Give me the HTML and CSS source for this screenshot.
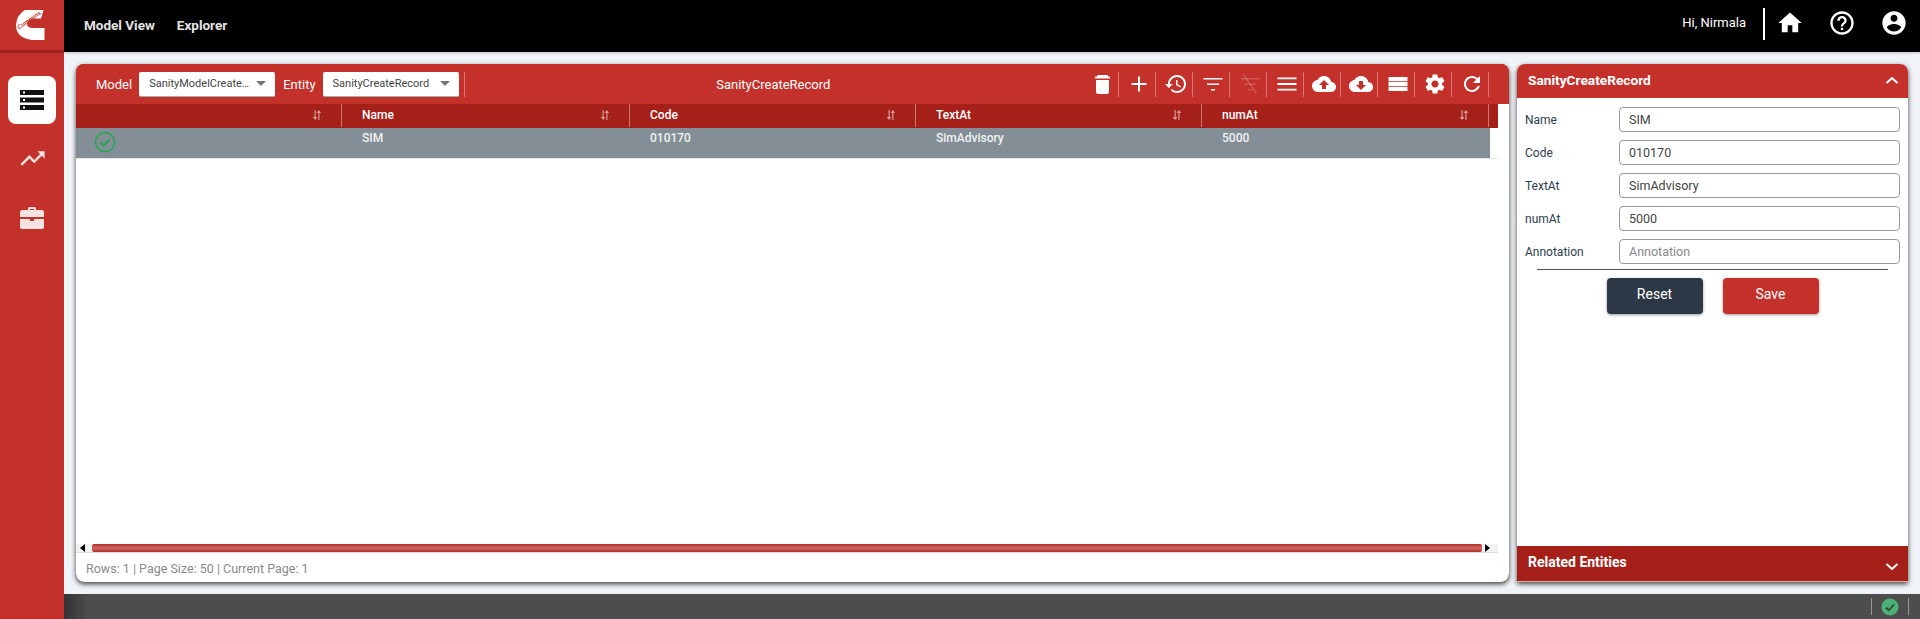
FILE: index.html
```html
<!DOCTYPE html>
<html lang="en">
<head>
    <meta charset="UTF-8">
    <title>Model View</title>
    <link rel="stylesheet" href="styles.css">
</head>
<body>
    <div class="app">
        <aside class="sidebar">
            <div class="logo">
                <svg width="64" height="50" viewBox="0 0 64 50">
                    <path fill="#fff" d="M25 10H43.500L41 18.500H33Q27 19.500 27 23.500Q27 27.500 32 28H44.500V40H32Q16 38 16 25Q17 14 25 10Z"/>
                    <text class="logo-text" transform="translate(19 29.500) rotate(-35)">Cummins</text>
                </svg>
            </div>
            <nav class="side-nav">
                <a class="side-item active">
                    <svg width="24" height="20" viewBox="0 0 24 20">
                        <rect y="0" width="24" height="5" fill="#111"/>
                        <rect y="7.500" width="24" height="5" fill="#111"/>
                        <rect y="15" width="24" height="5" fill="#111"/>
                        <rect x="3" y="1.500" width="2" height="2" fill="#fff"/>
                        <rect x="3" y="9" width="2" height="2" fill="#fff"/>
                        <rect x="3" y="16.500" width="2" height="2" fill="#fff"/>
                    </svg>
                </a>
                <a class="side-item">
                    <svg width="29" height="29" viewBox="0 0 24 24"><path fill="#f6e3e1" d="M16 6l2.290 2.290-4.880 4.880-4-4L2 16.590 3.410 18l6-6 4 4 6.300-6.290L22 12V6z"/></svg>
                </a>
                <a class="side-item side-item-last">
                    <svg width="24" height="22" viewBox="0 0 24 22">
                        <path fill="#f6e3e1" d="M8 3V1.500C8 .7 8.700 0 9.500 0h5c.8 0 1.500.7 1.500 1.500V3h6c1 0 2 1 2 2v5H0V5c0-1 1-2 2-2zM10 3h4V2h-4zM0 12h10v2h4v-2h10v8c0 1-1 2-2 2H2c-1 0-2-1-2-2z"/>
                        <rect x="10" y="10" width="4" height="4" fill="#c4312b"/>
                    </svg>
                </a>
            </nav>
        </aside>

        <div class="main">
            <header class="topbar">
                <nav class="top-nav">
                    <a>Model View</a>
                    <a>Explorer</a>
                </nav>
                <div class="top-right">
                    <span class="greeting">Hi, Nirmala</span>
                    <span class="top-sep"></span>
                    <svg class="top-icon" viewBox="0 0 24 24"><path d="M10 20v-6h4v6h5v-8h3L12 3 2 12h3v8z"/></svg>
                    <svg class="top-icon" viewBox="0 0 24 24"><path d="M11 18h2v-2h-2v2zm1-16C6.480 2 2 6.480 2 12s4.480 10 10 10 10-4.480 10-10S17.520 2 12 2zm0 18c-4.410 0-8-3.590-8-8s3.590-8 8-8 8 3.590 8 8-3.590 8-8 8zm0-14c-2.210 0-4 1.790-4 4h2c0-1.100.9-2 2-2s2 .9 2 2c0 2-3 1.750-3 5h2c0-2.250 3-2.500 3-5 0-2.210-1.790-4-4-4z"/></svg>
                    <svg class="top-icon" viewBox="0 0 24 24"><path d="M12 2C6.480 2 2 6.480 2 12s4.480 10 10 10 10-4.480 10-10S17.520 2 12 2zm0 3c1.660 0 3 1.340 3 3s-1.340 3-3 3-3-1.340-3-3 1.340-3 3-3zm0 14.200c-2.500 0-4.710-1.280-6-3.220.03-1.990 4-3.080 6-3.080 1.990 0 5.970 1.090 6 3.080-1.290 1.940-3.500 3.220-6 3.220z"/></svg>
                </div>
            </header>

            <div class="content">
                <section class="card">
                    <div class="toolbar">
                        <label class="tb-label">Model</label>
                        <div class="select"><span class="select-text">SanityModelCreateRecord</span><i class="caret"></i></div>
                        <label class="tb-label">Entity</label>
                        <div class="select"><span class="select-text">SanityCreateRecord</span><i class="caret"></i></div>
                        <span class="tb-sep"></span>
                        <div class="tb-title">SanityCreateRecord</div>
                        <div class="tb-icons">
                            <a class="tb-btn"><svg class="trash" viewBox="0 0 15 19"><path d="M2.500 0H12.500L13 1.500H15V3.500H0V1.500H2zM1 5H14V17C14 18 13 19 12 19H3C2 19 1 18 1 17z"/></svg></a>
                            <a class="tb-btn"><svg viewBox="0 0 24 24"><path d="M19.500 13h-6.500v6.500h-2V13H4.500v-2H11V4.500h2V11h6.500z"/></svg></a>
                            <a class="tb-btn"><svg viewBox="0 0 24 24"><path d="M13 3c-4.970 0-9 4.030-9 9H1l3.890 3.890.07.140L9 12H6c0-3.870 3.130-7 7-7s7 3.130 7 7-3.130 7-7 7c-1.930 0-3.680-.79-4.940-2.060l-1.420 1.420C8.270 19.990 10.510 21 13 21c4.970 0 9-4.030 9-9s-4.030-9-9-9zm-1 5v5l4.280 2.540.72-1.210-3.500-2.080V8H12z"/></svg></a>
                            <a class="tb-btn"><svg viewBox="0 0 24 24"><path d="M10 18.500h4v-1.500h-4zM2.500 6v1.500h19V6zM6 13h12v-1.500H6z"/></svg></a>
                            <a class="tb-btn disabled"><svg viewBox="0 0 24 24"><path d="M10 18.500h4v-1.500h-4zM2.500 6v1.500h19V6zM6 13h12v-1.500H6z"/><path d="M5 3l1.100-.8L19 21l-1.100.8z"/></svg></a>
                            <a class="tb-btn"><svg viewBox="0 0 24 24"><path d="M2.500 18.500h19v-1.800h-19zm0-5.600h19v-1.800h-19zm0-7.400v1.800h19V5.500z"/></svg></a>
                            <a class="tb-btn"><svg viewBox="0 0 24 24"><path d="M19.350 10.040C18.670 6.590 15.640 4 12 4 9.110 4 6.600 5.640 5.350 8.040 2.340 8.360 0 10.910 0 14c0 3.310 2.690 6 6 6h13c2.760 0 5-2.240 5-5 0-2.640-2.050-4.780-4.650-4.960zM14 13v4h-4v-4H7l5-5 5 5h-3z"/></svg></a>
                            <a class="tb-btn"><svg viewBox="0 0 24 24"><path d="M19.350 10.040C18.670 6.590 15.640 4 12 4 9.110 4 6.600 5.640 5.350 8.040 2.340 8.360 0 10.910 0 14c0 3.310 2.690 6 6 6h13c2.760 0 5-2.240 5-5 0-2.640-2.050-4.780-4.650-4.960zM17 13l-5 5-5-5h3V9h4v4h3z"/></svg></a>
                            <a class="tb-btn"><svg viewBox="0 0 24 24"><path d="M2.500 5h19v4.200h-19zM2.500 10h19v4h-19zM2.500 14.800h19v4.200h-19z"/></svg></a>
                            <a class="tb-btn"><svg viewBox="0 0 24 24"><path d="M19.140 12.940c.04-.3.06-.61.06-.94 0-.32-.02-.64-.07-.94l2.030-1.580c.18-.14.23-.41.12-.61l-1.920-3.320c-.12-.22-.37-.29-.59-.22l-2.390.96c-.5-.38-1.030-.7-1.620-.94l-.36-2.540c-.04-.24-.24-.41-.48-.41h-3.840c-.24 0-.43.17-.47.41l-.36 2.540c-.59.24-1.130.57-1.620.94l-2.390-.96c-.22-.08-.47 0-.59.22L2.740 8.870c-.12.21-.08.47.12.61l2.030 1.580c-.05.3-.09.63-.09.94s.02.64.07.94l-2.030 1.580c-.18.14-.23.41-.12.61l1.920 3.320c.12.22.37.29.59.22l2.390-.96c.5.38 1.030.7 1.620.94l.36 2.540c.05.24.24.41.48.41h3.840c.24 0 .44-.17.47-.41l.36-2.540c.59-.24 1.130-.56 1.620-.94l2.390.96c.22.08.47 0 .59-.22l1.920-3.320c.12-.22.07-.47-.12-.61l-2.010-1.580zM12 15.600c-1.980 0-3.600-1.620-3.600-3.600s1.620-3.600 3.600-3.600 3.600 1.620 3.600 3.600-1.620 3.600-3.600 3.600z"/></svg></a>
                            <a class="tb-btn"><svg viewBox="0 0 24 24"><path d="M17.650 6.350C16.200 4.900 14.210 4 12 4c-4.420 0-7.990 3.580-7.990 8s3.570 8 7.990 8c3.730 0 6.840-2.550 7.730-6h-2.080c-.82 2.330-3.040 4-5.650 4-3.310 0-6-2.690-6-6s2.690-6 6-6c1.660 0 3.140.69 4.220 1.780L13 11h7V4l-2.350 2.350z"/></svg></a>
                        </div>
                    </div>

                    <div class="card-main">
                        <div class="grid-head">
                            <div class="hcell"><svg class="sort" viewBox="0 0 10 10"><path d="M2.500 0h1.200v7H5.500L3.100 10 .7 7h1.800zM6.300 10h1.200V3h1.800L6.900 0 4.500 3h1.800z"/></svg></div>
                            <div class="hcell">Name<svg class="sort" viewBox="0 0 10 10"><path d="M2.500 0h1.200v7H5.500L3.100 10 .7 7h1.800zM6.300 10h1.200V3h1.800L6.900 0 4.500 3h1.800z"/></svg></div>
                            <div class="hcell">Code<svg class="sort" viewBox="0 0 10 10"><path d="M2.500 0h1.200v7H5.500L3.100 10 .7 7h1.800zM6.300 10h1.200V3h1.800L6.900 0 4.500 3h1.800z"/></svg></div>
                            <div class="hcell">TextAt<svg class="sort" viewBox="0 0 10 10"><path d="M2.500 0h1.200v7H5.500L3.100 10 .7 7h1.800zM6.300 10h1.200V3h1.800L6.900 0 4.500 3h1.800z"/></svg></div>
                            <div class="hcell">numAt<svg class="sort" viewBox="0 0 10 10"><path d="M2.500 0h1.200v7H5.500L3.100 10 .7 7h1.800zM6.300 10h1.200V3h1.800L6.900 0 4.500 3h1.800z"/></svg></div>
                        </div>

                        <div class="grid-body">
                            <div class="grid-rowline">
                                <div class="grid-row">
                                    <div class="cell cell-check">
                                        <svg width="22" height="22" viewBox="0 0 22 22"><circle cx="11" cy="11" r="9.500" fill="none" stroke="#23a84f" stroke-width="1.500"/><path d="M6.500 11.500l3 3 6-6" fill="none" stroke="#23a84f" stroke-width="2"/></svg>
                                    </div>
                                    <div class="cell">SIM</div>
                                    <div class="cell">010170</div>
                                    <div class="cell">SimAdvisory</div>
                                    <div class="cell">5000</div>
                                </div>
                            </div>
                        </div>

                        <div class="hscroll">
                            <i class="arrow arrow-left"></i>
                            <div class="thumb"></div>
                            <i class="arrow arrow-right"></i>
                        </div>
                    </div>
                    <div class="grid-foot">Rows: 1 | Page Size: 50 | Current Page: 1</div>
                </section>

                <aside class="panel">
                    <div class="panel-head">
                        <span>SanityCreateRecord</span>
                        <svg class="chev" viewBox="0 0 14 8"><path d="M1.500 7L7 2l5.500 5" fill="none" stroke="#fff" stroke-width="2"/></svg>
                    </div>
                    <form class="form">
                        <div class="field"><label>Name</label><input type="text" value="SIM"></div>
                        <div class="field"><label>Code</label><input type="text" value="010170"></div>
                        <div class="field"><label>TextAt</label><input type="text" value="SimAdvisory"></div>
                        <div class="field"><label>numAt</label><input type="text" value="5000"></div>
                        <div class="field"><label>Annotation</label><input type="text" placeholder="Annotation"></div>
                        <hr class="form-sep">
                        <div class="form-actions">
                            <button type="button" class="btn btn-reset">Reset</button>
                            <button type="button" class="btn btn-save">Save</button>
                        </div>
                    </form>
                    <div class="panel-foot">
                        <span>Related Entities</span>
                        <svg class="chev chev-down" viewBox="0 0 14 8"><path d="M1.500 1L7 6l5.500-5" fill="none" stroke="#fff" stroke-width="2"/></svg>
                    </div>
                </aside>
            </div>

            <footer class="statusbar">
                <span class="status-sep"></span>
                <svg width="18" height="18" viewBox="0 0 18 18"><circle cx="9" cy="9" r="8.500" fill="#4cb274"/><path d="M5 9.500l2.800 2.800L13 6.500" fill="none" stroke="#33413a" stroke-width="1.800"/></svg>
                <span class="status-sep"></span>
            </footer>
        </div>
    </div>
</body>
</html>
```

FILE: styles.css
```css
* {
    box-sizing: border-box;
}

html, body {
    height: 100%;
}

body {
    margin: 0;
    background-color: #f0f4f8;
    font-family: 'Roboto', 'Liberation Sans', sans-serif;
    font-size: 12px;
    color: #333;
    overflow: hidden;
}

.app {
    display: flex;
    height: 100%;
}

/* Left sidebar */
.sidebar {
    width: 64px;
    flex-shrink: 0;
    background-color: #c4312b;
    position: relative;
    z-index: 3;
}

.logo {
    height: 53px;
    border-bottom: 3px solid #9c2420;
}

.logo svg {
    display: block;
}

.logo-text {
    font-family: 'Liberation Sans', sans-serif;
    font-size: 6px;
    font-weight: 700;
    fill: #c4312b;
}

.side-nav {
    display: flex;
    flex-direction: column;
    align-items: center;
    padding-top: 23px;
    gap: 10px;
}

.side-item {
    width: 48px;
    height: 48px;
    display: flex;
    align-items: center;
    justify-content: center;
    border-radius: 8px;
}

.side-item.active {
    background-color: #fff;
}

.side-item-last {
    margin-top: 2px;
}

/* Top bar */
.main {
    flex: 1;
    min-width: 0;
    display: flex;
    flex-direction: column;
}

.topbar {
    height: 52px;
    flex-shrink: 0;
    background-color: #000;
    display: flex;
    align-items: center;
    justify-content: space-between;
    padding: 0 12px 2px 20px;
    box-shadow: 0 1px 3px rgba(0, 0, 0, 0.2);
}

.top-nav {
    display: flex;
    gap: 22px;
}

.top-nav a {
    color: #e4e4e4;
    font-size: 13.500px;
    font-weight: 700;
}

.top-right {
    display: flex;
    align-items: center;
}

.greeting {
    color: #fff;
    font-size: 13px;
    margin: 0 17px 6px 0;
}

.top-sep {
    width: 2px;
    height: 32px;
    background-color: #fff;
    margin: 0 11px 2px 0;
}

.top-icon {
    width: 28px;
    height: 28px;
    fill: #fff;
    margin: 0 24px 4px 0;
}

.top-icon:last-child {
    margin-right: 0;
}

/* Content area */
.content {
    flex: 1;
    min-height: 0;
    display: grid;
    grid-template-columns: 1fr 391px;
    gap: 8px;
    padding: 12px;
}

.card, .panel {
    display: flex;
    flex-direction: column;
    min-height: 0;
    box-shadow: 0 2px 5px rgba(0, 0, 0, 0.75);
}

.card {
    background-color: #c4312b;
    border-radius: 8px;
    overflow: hidden;
}

.toolbar {
    height: 40px;
    flex-shrink: 0;
    background-color: #c4312b;
    display: flex;
    align-items: center;
    padding: 0 20px;
    color: #fff;
}

.tb-label {
    font-size: 13px;
    margin-right: 7px;
}

.select {
    width: 136px;
    height: 25px;
    background-color: #fff;
    border-bottom: 1px solid #aaa;
    border-radius: 2px;
    display: flex;
    align-items: center;
    padding: 0 9px 0 10px;
    margin-right: 8px;
    color: #444;
    font-size: 11px;
}

.select-text {
    flex: 1;
    min-width: 0;
    overflow: hidden;
    white-space: nowrap;
    text-overflow: ellipsis;
}

.caret {
    flex-shrink: 0;
    margin-left: 3px;
    border-left: 5px solid transparent;
    border-right: 5px solid transparent;
    border-top: 5px solid #777;
}

.tb-sep {
    width: 1px;
    height: 25px;
    background-color: rgba(255, 255, 255, 0.35);
    margin-left: -3px;
}

.tb-title {
    flex: 1;
    text-align: center;
    font-size: 13px;
}

.tb-icons {
    display: flex;
}

.tb-btn {
    width: 37px;
    height: 25px;
    display: flex;
    align-items: center;
    justify-content: center;
    padding-left: 4px;
    border-right: 1px solid rgba(255, 255, 255, 0.35);
}

.tb-btn svg {
    width: 24px;
    height: 24px;
    fill: #fff;
}

.tb-btn svg.trash {
    width: 15px;
    height: 19px;
}

.tb-btn.disabled svg {
    fill: rgba(255, 255, 255, 0.2);
}

/* Grid */
.card-main {
    flex: 1;
    min-height: 0;
    display: flex;
    flex-direction: column;
    background-color: #fff;
}

.grid-head {
    height: 24px;
    flex-shrink: 0;
    width: 1422px;
    padding-right: 9px;
    background-color: #a6201a;
    display: grid;
    grid-template-columns: 266px 288px 286px 286px 287px;
    color: #fff;
    font-size: 12px;
    font-weight: 500;
}

.hcell {
    display: flex;
    align-items: center;
    justify-content: space-between;
    padding: 0 19px 2px 20px;
    border-right: 1px solid rgba(255, 255, 255, 0.4);
    margin: 0 0 1px;
}

.hcell:first-child {
    justify-content: flex-end;
}

.sort {
    width: 10px;
    height: 10px;
    fill: rgba(255, 255, 255, 0.55);
}

.grid-body {
    flex: 1;
    min-height: 0;
}

.grid-rowline {
    width: 1422px;
    border-bottom: 1px solid #e4e4e4;
}

.grid-row {
    width: 1414px;
    height: 30px;
    background-color: #838e96;
    display: grid;
    grid-template-columns: 266px 288px 286px 286px 288px;
    color: #f2f2f2;
    font-weight: 500;
}

.cell {
    padding: 3px 20px 0;
    line-height: 14px;
}

.cell-check {
    padding: 3px 0 0 18px;
}

.hscroll {
    height: 9px;
    flex-shrink: 0;
    width: 1422px;
    display: flex;
    align-items: stretch;
    background-color: #f1f1f1;
    border-bottom: 1px solid #ddd;
}

.thumb {
    flex: 1;
    margin-left: 3px;
    background: linear-gradient(#b52a25, #cf6a66 50%, #b52a25);
    border-radius: 2px;
}

.arrow {
    width: 13px;
    display: flex;
    align-items: center;
    justify-content: center;
}

.arrow::before {
    content: "";
    border-top: 4px solid transparent;
    border-bottom: 4px solid transparent;
}

.arrow-left::before {
    border-right: 5px solid #000;
}

.arrow-right {
    width: 16px;
    padding-right: 6px;
}

.arrow-right::before {
    border-left: 5px solid #000;
}

.grid-foot {
    height: 29px;
    flex-shrink: 0;
    padding: 8px 10px 0;
    background-color: #fff;
    border-radius: 0 0 8px 8px;
    color: #8a8a8a;
    font-size: 12.500px;
    line-height: 15px;
}

/* Right panel */
.panel {
    background-color: #fff;
    border-radius: 8px 8px 0 0;
}

.panel-head {
    height: 34px;
    flex-shrink: 0;
    background-color: #c4312b;
    border-radius: 8px 8px 0 0;
    display: flex;
    align-items: center;
    justify-content: space-between;
    padding: 0 9px 2px 11px;
    color: #fff;
    font-size: 13.700px;
    font-weight: 700;
}

.chev {
    width: 14px;
    height: 8px;
}

.form {
    flex: 1;
    min-height: 0;
    padding: 9px 8px 0;
}

.field {
    display: flex;
    align-items: center;
    height: 25px;
    margin-bottom: 8px;
}

.field label {
    width: 94px;
    color: #2c3e50;
    font-size: 12px;
}

.field input {
    flex: 1;
    min-width: 0;
    height: 25px;
    border: 1px solid #999;
    border-radius: 4px;
    padding: 0 9px;
    font-family: inherit;
    font-size: 12.500px;
    color: #444;
    background-color: #fff;
}

.field input::placeholder {
    color: #888;
}

.form-sep {
    border: 0;
    border-top: 1px solid #4a545c;
    margin: -3px 12px 8px 12px;
}

.form-actions {
    display: flex;
    justify-content: center;
    gap: 20px;
}

.btn {
    width: 96px;
    height: 36px;
    border: 0;
    border-radius: 4px;
    color: #fff;
    font-family: inherit;
    font-size: 14px;
    box-shadow: 0 1px 3px rgba(0, 0, 0, 0.4);
    padding-bottom: 5px;
}

.btn-reset {
    background-color: #2c3846;
}

.btn-save {
    background-color: #c4312b;
}

.panel-foot {
    height: 36px;
    flex-shrink: 0;
    background-color: #a6201a;
    border-bottom: 1px solid #e8a8a4;
    display: flex;
    align-items: center;
    justify-content: space-between;
    padding: 0 9px 0 11px;
    color: #fff;
    font-size: 14px;
    font-weight: 700;
}

.panel-foot span {
    margin-bottom: 4px;
}

.chev-down {
    margin-top: 7px;
}

/* Status bar */
.statusbar {
    height: 25px;
    flex-shrink: 0;
    background: linear-gradient(90deg, #333 0, #4d4d4d 24px);
    display: flex;
    align-items: center;
    justify-content: flex-end;
    padding-right: 11px;
    gap: 9px;
}

.status-sep {
    width: 1px;
    height: 17px;
    background-color: #999;
}
```
